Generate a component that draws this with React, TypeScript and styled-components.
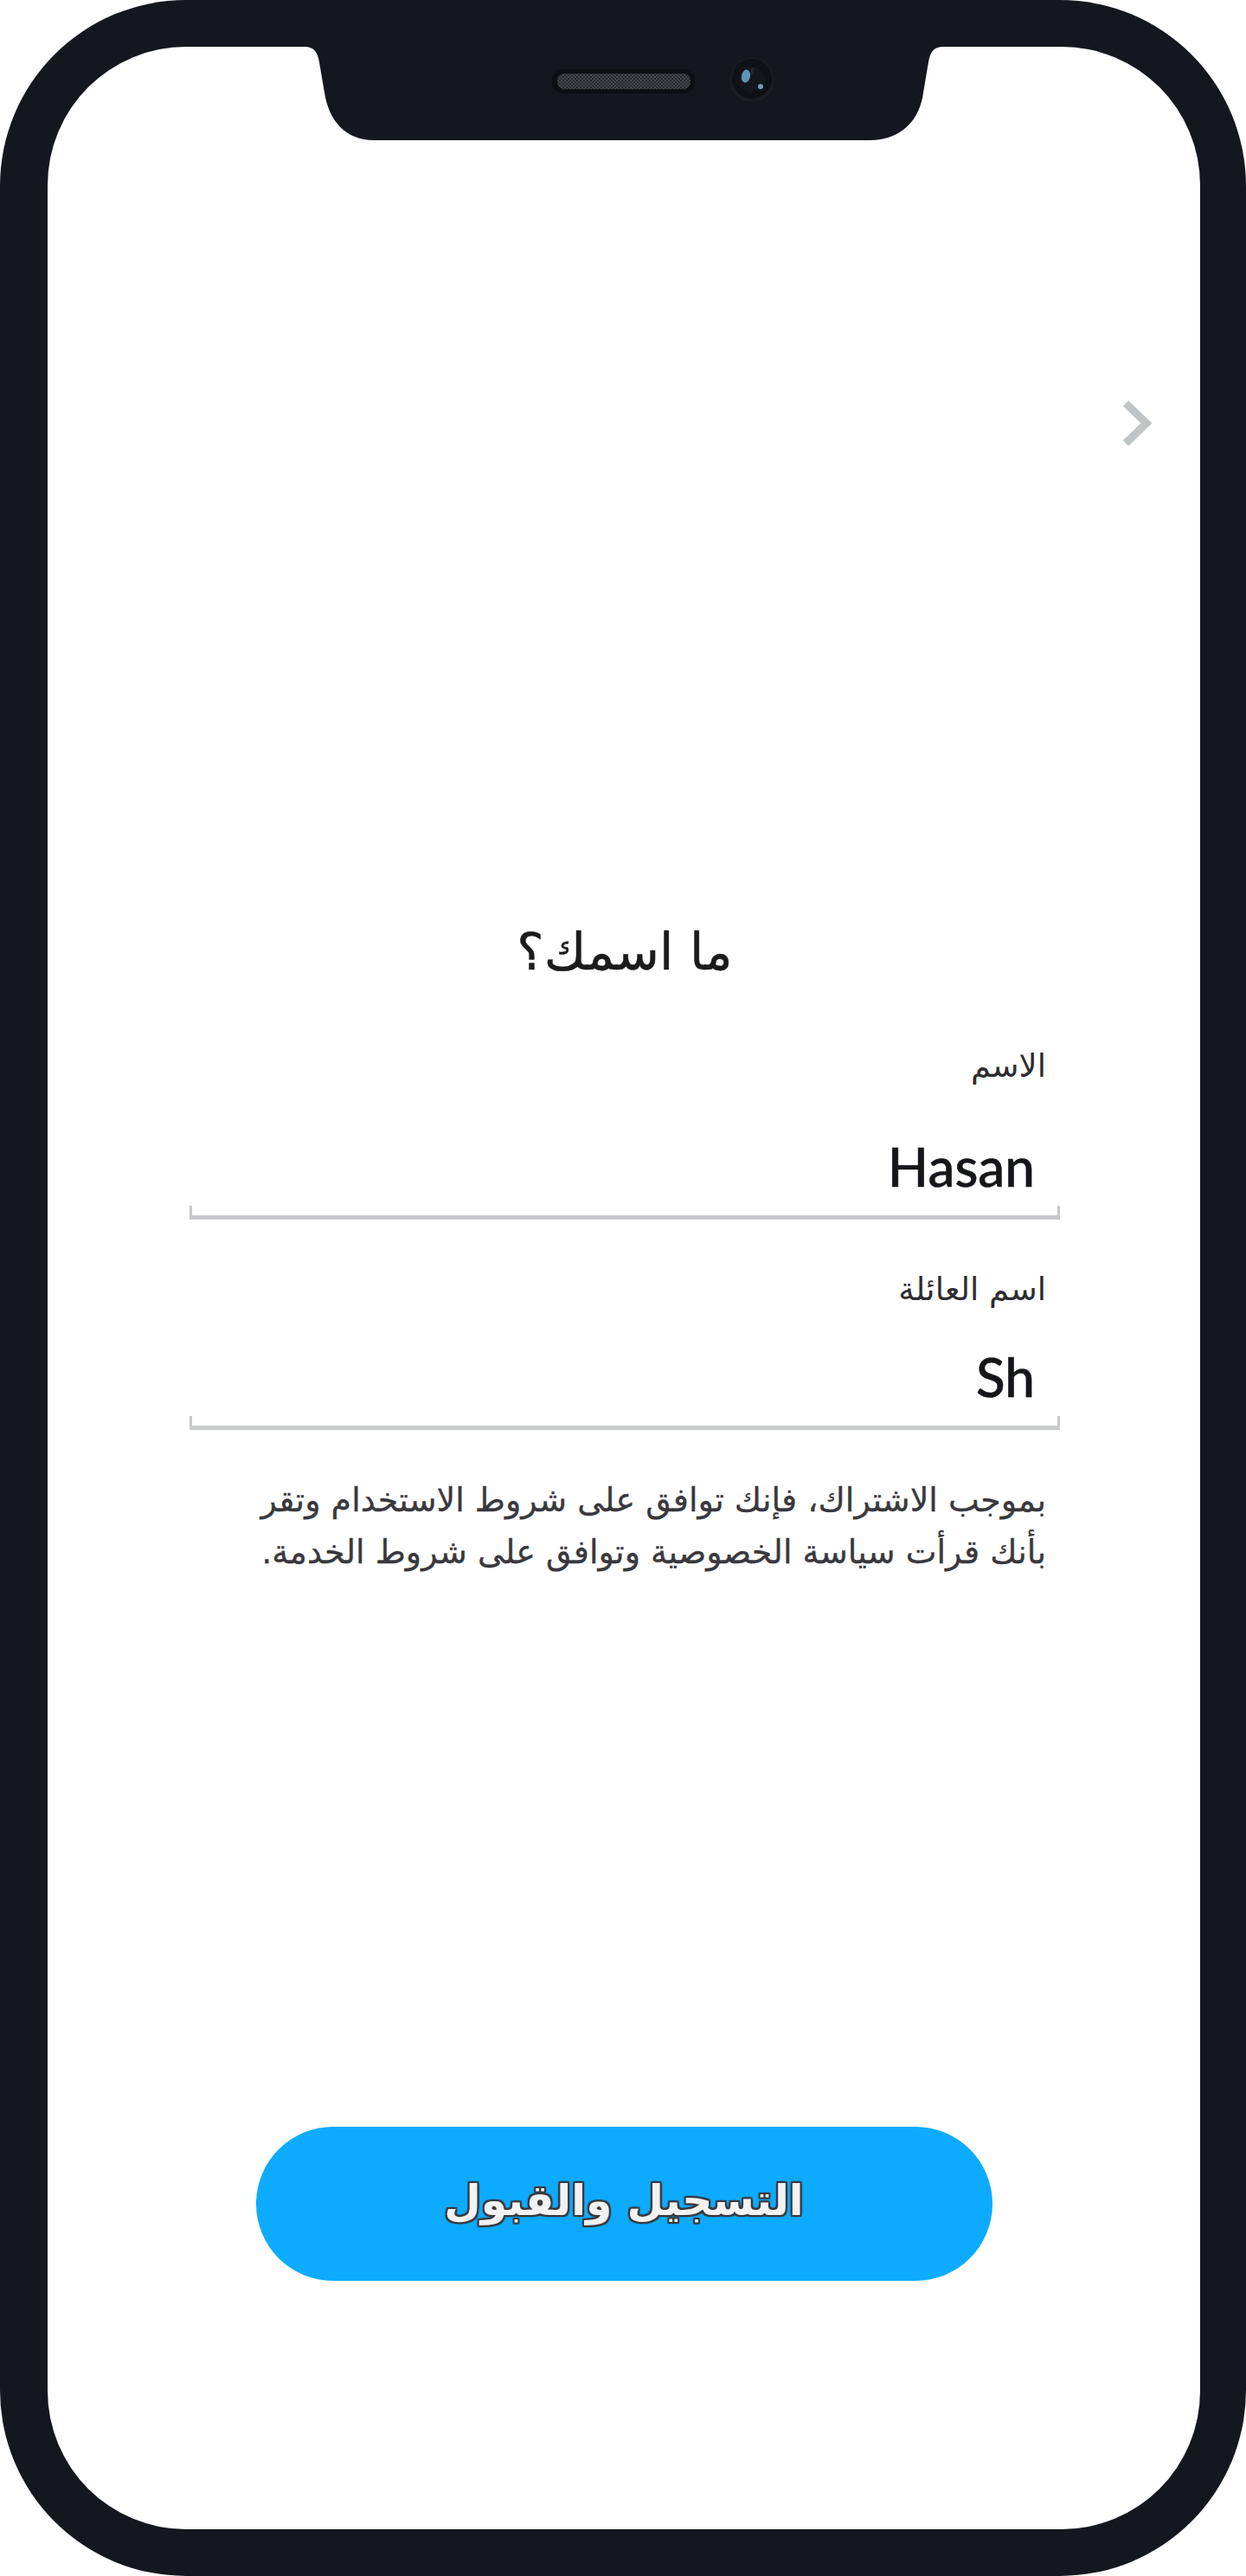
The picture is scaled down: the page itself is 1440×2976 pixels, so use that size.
import styled, { createGlobalStyle } from "styled-components";

const GlobalStyle = createGlobalStyle`
  html, body {
    margin: 0;
    padding: 0;
    background: #fff;
  }
  body {
    font-family: "DejaVu Sans", "Noto Sans", sans-serif;
  }
`;

const Phone = styled.div`
  position: relative;
  box-sizing: border-box;
  width: 1440px;
  height: 2976px;
  padding: 54px 53px 54px 55px;
  background: #15171f;
  border-radius: 215px;
`;

const Screen = styled.main`
  box-sizing: border-box;
  height: 100%;
  padding-top: 408px;
  display: flex;
  flex-direction: column;
  align-items: center;
  background: #fff;
  border-radius: 160px;
`;

const Notch = styled.svg`
  position: absolute;
  left: 340px;
  top: 50px;
`;

const BackButton = styled.button`
  align-self: flex-start;
  display: flex;
  margin: 0 55px 0 0;
  padding: 0;
  border: 0;
  background: none;
`;

const Title = styled.h1`
  margin: 544px 0 0;
  padding-left: 2px;
  font-size: 59px;
  line-height: 80px;
  font-weight: 400;
  color: #1b1b1d;
  -webkit-text-stroke: 0.5px #1b1b1d;
`;

const Form = styled.form`
  box-sizing: border-box;
  width: 1006px;
  margin-top: 67px;
  margin-left: 2px;
`;

const Field = styled.label`
  display: block;
  margin-bottom: 56px;
`;

const FieldLabel = styled.span<{ $gap?: number }>`
  display: block;
  margin-bottom: ${(p) => p.$gap ?? 0}px;
  padding-right: 16px;
  font-size: 37px;
  line-height: 50px;
  color: #2d2d30;
`;

const Value = styled.div`
  height: 121px;
  box-sizing: border-box;
  padding: 40px 29px 0 0;
  font-family: Lato, "Noto Sans", sans-serif;
  font-size: 62px;
  font-weight: 500;
  line-height: 70px;
  color: #15161a;
  text-align: right;
  direction: ltr;
  -webkit-text-stroke: 0.6px #15161a;
`;

const Underline = styled.div`
  box-sizing: border-box;
  height: 16px;
  border: 3px solid #c8c9cb;
  border-top: 0;
  border-bottom-width: 5px;
`;

const Terms = styled.p`
  margin: -5px 0 0;
  padding-right: 16px;
  font-size: 38px;
  line-height: 60px;
  color: #38383c;
  -webkit-text-stroke: 0.3px #38383c;
`;

const SubmitButton = styled.button`
  width: 851px;
  height: 178px;
  margin-top: auto;
  margin-bottom: 287px;
  padding: 0 0 8px;
  border: 0;
  border-radius: 89px;
  background: #0dabff;
  font-family: inherit;
  font-size: 49px;
  font-weight: 700;
  color: #f2f2f2;
  text-shadow:
    2px 0 1px #3a3a3e,
    -2px 0 1px #3a3a3e,
    0 2px 1px #3a3a3e,
    0 -2px 1px #3a3a3e,
    2px 2px 1px #3a3a3e,
    -2px -2px 1px #3a3a3e,
    2px -2px 1px #3a3a3e,
    -2px 2px 1px #3a3a3e;
`;

function NotchArt() {
  return (
    <Notch width="760" height="114" viewBox="340 50 760 114">
      <defs>
        <pattern id="mesh" width="4" height="4" patternUnits="userSpaceOnUse">
          <rect width="4" height="4" fill="#26282c" />
          <rect width="2" height="2" fill="#45474b" />
          <rect x="2" y="2" width="2" height="2" fill="#45474b" />
        </pattern>
      </defs>
      <path
        d="M340 50H1100V54H1090C1079 54 1075 60 1073 72L1067 107C1063 140 1040 162 1005 162H432C400 162 380 140 375 107L369 72C367 60 363 54 352 54H340Z"
        fill="#15171f"
      />
      <rect x="638" y="80" width="165" height="28" rx="14" fill="#0e0f14" />
      <rect x="644" y="85" width="154" height="18" rx="8" fill="url(#mesh)" />
      <circle cx="869" cy="92" r="26" fill="#1a1c22" />
      <circle cx="869" cy="91" r="23" fill="#101116" />
      <circle cx="869" cy="92" r="15" fill="#14161c" />
      <ellipse cx="862" cy="88" rx="5" ry="7.5" fill="#5f95b8" transform="rotate(12 862 88)" />
      <circle cx="879" cy="100" r="3" fill="#6a9fbe" />
      <rect x="868" y="78" width="3" height="8" fill="#24272c" />
    </Notch>
  );
}

export default function App() {
  return (
    <>
      <GlobalStyle />
      <Phone>
        <NotchArt />
        <Screen dir="rtl">
          <BackButton type="button" aria-label="back">
            <svg width="36" height="54" viewBox="0 0 36 54" fill="none">
              <path d="M5 4 L29 27 L5 50" stroke="#c0c4c6" strokeWidth="9" />
            </svg>
          </BackButton>
          <Title>ما اسمك؟</Title>
          <Form>
            <Field>
              <FieldLabel $gap={15}>الاسم</FieldLabel>
              <Value>Hasan</Value>
              <Underline />
            </Field>
            <Field>
              <FieldLabel>اسم العائلة</FieldLabel>
              <Value>Sh</Value>
              <Underline />
            </Field>
            <Terms>
              بموجب الاشتراك، فإنك توافق على شروط الاستخدام وتقر
              <br />
              بأنك قرأت سياسة الخصوصية وتوافق على شروط الخدمة.
            </Terms>
          </Form>
          <SubmitButton type="button">التسجيل والقبول</SubmitButton>
        </Screen>
      </Phone>
    </>
  );
}
